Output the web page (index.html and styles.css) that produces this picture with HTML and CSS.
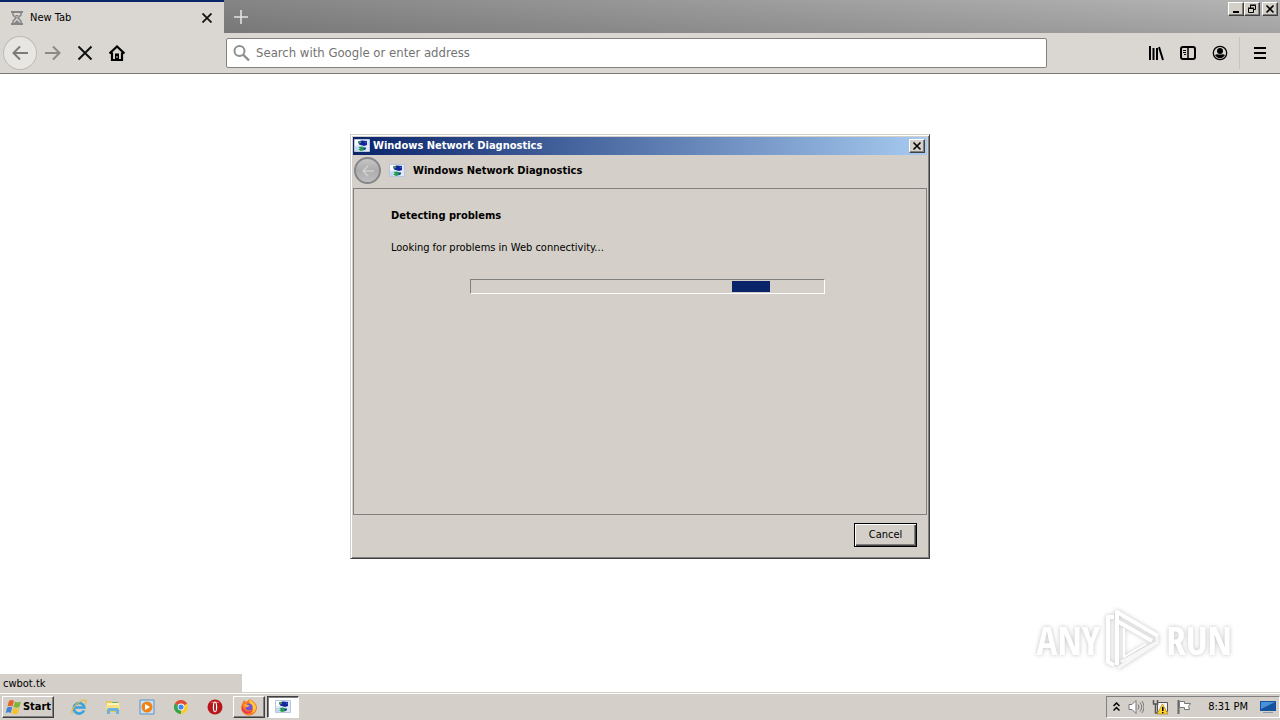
FILE: index.html
```
<!DOCTYPE html>
<html lang="en">
  <head>
    <meta charset="UTF-8" />
    <meta name="viewport" content="width=device-width, initial-scale=1.0" />
    <title>New Tab</title>
    <link rel="stylesheet" href="styles.css" />
  </head>
  <body>
    <!-- Shared window icon -->
    <svg class="defs" width="0" height="0" aria-hidden="true">
      <symbol id="net-icon" viewBox="0 0 16 16">
        <path d="M.5 1.500h15v12H.5z" fill="#dfe8f8" stroke="#b9c4dd" />
        <path d="M1 2h5v5H1z" fill="#fff" />
        <path d="M1 9h3v4H1z" fill="#c3d6f4" />
        <path d="M4 3.500l4-1 5 .5v4l-3 1-5-1.500z" fill="#14259a" />
        <path d="M4 3.500l3-.5v2l-2 .5z" fill="#3f9a5a" />
        <path d="M10 3.500l3 .5-1 1.500z" fill="#3b59cf" />
        <path d="M4 9l4-.5 4 1.500-1 2-4 1-3-1.500 2-1z" fill="#23994f" />
        <path d="M9 10l3-.5v1.500l-2 1z" fill="#1c3fa5" />
      </symbol>
    </svg>

    <header class="tab-strip">
      <div class="tab">
        <svg class="tab-icon" width="14" height="14" viewBox="0 0 14 14" fill="none" stroke="#858585">
          <path d="M1 1h12M1 13h12" stroke-width="2" />
          <path d="M3 2v2l3 3-3 3v2M11 2v2L8 7l3 3v2" stroke-width="1.5" />
          <path d="M5 4h4L7 6zM4 12l3-3 3 3z" fill="#858585" stroke="none" />
        </svg>
        <span class="tab-title">New Tab</span>
        <button class="icon-button tab-close" aria-label="Close tab">
          <svg width="10" height="10" viewBox="0 0 10 10" stroke="#111" stroke-width="1.8"><path d="M.5.5l9 9M9.500.5l-9 9" /></svg>
        </button>
      </div>
      <button class="icon-button new-tab" aria-label="New tab">
        <svg width="14" height="14" viewBox="0 0 14 14" stroke="#e2e2e2" stroke-width="1.6"><path d="M7 0v14M0 7h14" /></svg>
      </button>
      <div class="window-buttons">
        <button class="caption-button" aria-label="Minimize">
          <svg width="10" height="10" viewBox="0 0 10 10"><path d="M2 7h6v2H2z" /></svg>
        </button>
        <button class="caption-button" aria-label="Restore">
          <svg width="10" height="10" viewBox="0 0 10 10" fill="none" stroke="#000"><path d="M3.500 4V1.500h5v4H7M3 1h6M1.500 4.500h5v4h-5zM1 4h6" /></svg>
        </button>
        <button class="caption-button close" aria-label="Close">
          <svg width="10" height="10" viewBox="0 0 10 10" stroke="#000" stroke-width="1.6"><path d="M1.500 1.500l7 7M8.500 1.500l-7 7" /></svg>
        </button>
      </div>
    </header>

    <nav class="toolbar">
      <div class="nav-buttons">
        <button class="icon-button back" aria-label="Back">
          <svg width="16" height="16" viewBox="0 0 16 16" fill="none" stroke="#7d7b78" stroke-width="2"><path d="M16 8H1.500M8 1.500L1.500 8 8 14.500" /></svg>
        </button>
        <button class="icon-button" aria-label="Forward">
          <svg width="16" height="16" viewBox="0 0 16 16" fill="none" stroke="#8b8986" stroke-width="2"><path d="M0 8h14.500M8 1.500L14.500 8 8 14.500" /></svg>
        </button>
        <button class="icon-button" aria-label="Stop">
          <svg width="16" height="16" viewBox="0 0 16 16" stroke="#111" stroke-width="2"><path d="M1.500 1.500l13 13M14.500 1.500l-13 13" /></svg>
        </button>
        <button class="icon-button" aria-label="Home">
          <svg width="16" height="16" viewBox="0 0 16 16" fill="none" stroke="#000" stroke-width="2.200"><path d="M.5 8.500L8 1.500l7.500 7M3 7.500V15h10V7.500" /><path d="M6 8.500h4V14H6z" fill="#000" stroke="none" /><path d="M8 11v2" stroke="#dad7d2" stroke-width="1" /></svg>
        </button>
      </div>
      <label class="url-bar">
        <svg width="18" height="18" viewBox="0 0 18 18" fill="none" stroke="#8f8f8f" stroke-width="2"><circle cx="6.500" cy="7" r="5" /><path d="M10 10.500l6 6" stroke-width="2.400" /></svg>
        <input type="text" placeholder="Search with Google or enter address" aria-label="Address" />
      </label>
      <div class="tool-buttons">
        <button class="icon-button" aria-label="Library">
          <svg width="16" height="16" viewBox="0 0 16 16" stroke="#000" stroke-width="2"><path d="M2 1v14M5.500 3v12M9 3v12M11 2l4 13" /></svg>
        </button>
        <button class="icon-button" aria-label="Sidebars">
          <svg width="16" height="16" viewBox="0 0 16 16" fill="none" stroke="#000" stroke-width="2"><rect x="1" y="2" width="14" height="12" rx="2" /><path d="M8 2v12" stroke-width="1.500" /><path d="M3 5.500h3M3 7.500h3M4 9.500h2" stroke-width="1" /></svg>
        </button>
        <button class="icon-button" aria-label="Account">
          <svg width="16" height="16" viewBox="0 0 16 16"><circle cx="8" cy="8" r="6.700" fill="none" stroke="#000" stroke-width="1.300" /><circle cx="8" cy="6" r="3" /><path d="M3 10c2-1.500 3-.5 5-.5s3-1 5 .5c-1 2-3 3.200-5 3.200S4 12 3 10z" /></svg>
        </button>
      </div>
      <button class="icon-button menu" aria-label="Menu">
        <svg width="12" height="12" viewBox="0 0 12 12" stroke="#000" stroke-width="2"><path d="M0 1h12M0 6h12M0 11h12" /></svg>
      </button>
    </nav>

    <main class="page">
      <section class="dialog" role="dialog" aria-labelledby="dialog-title">
        <div class="dialog-titlebar">
          <svg width="16" height="16"><use href="#net-icon" /></svg>
          <span id="dialog-title">Windows Network Diagnostics</span>
          <button class="caption-button" aria-label="Close dialog">
            <svg width="10" height="10" viewBox="0 0 10 10" stroke="#000" stroke-width="1.6"><path d="M1.500 1.500l7 7M8.500 1.500l-7 7" /></svg>
          </button>
        </div>
        <div class="dialog-header">
          <button class="dialog-back" aria-label="Back" disabled>
            <svg width="14" height="14" viewBox="0 0 14 14" fill="none" stroke="#d0d0d0" stroke-width="1.500"><path d="M13 7H2M7 2L2 7l5 5" /></svg>
          </button>
          <svg width="16" height="16"><use href="#net-icon" /></svg>
          <h1>Windows Network Diagnostics</h1>
        </div>
        <div class="dialog-body">
          <h2>Detecting problems</h2>
          <p>Looking for problems in Web connectivity...</p>
          <div class="progress" role="progressbar" aria-label="Detecting problems">
            <div class="progress-chunk"></div>
          </div>
        </div>
        <div class="dialog-footer">
          <button class="cancel">Cancel</button>
        </div>
      </section>

      <div class="watermark">
        <span>ANY</span>
        <svg width="58" height="64" viewBox="0 0 58 64" fill="none" stroke="#fff" stroke-width="4" stroke-linejoin="round">
          <path d="M10 9H4v45l6 3" />
          <path d="M13 57V4l41 24M13 13l35 20" />
          <path d="M20 20v29l22-13" stroke-width="2" />
          <path d="M54 34L14 60M53 28v6L17 54" stroke="#f7f7f7" stroke-width="3" />
        </svg>
        <span>RUN</span>
      </div>
      <div class="status">cwbot.tk</div>
    </main>

    <footer class="taskbar">
      <button class="start">
        <svg width="18" height="16" viewBox="0 0 18 16">
          <path d="M4 2c2-1.500 4-1 5 0L7.500 7.500C6 6.500 4.500 6.500 2.500 7.300z" fill="#e8602c" />
          <path d="M10 2.500c2 1.300 4 1 6 0L14.500 8c-2 1-4 1-6 0z" fill="#7cb53a" />
          <path d="M2.200 8.500c2-1 3.500-1 5 0L5.700 14c-1.500-1-3-1-5 0z" fill="#3d86cf" />
          <path d="M8.200 9c2 1 4 1 6 0l-1.500 5.500c-2 1-4 1-6 0z" fill="#f5c22f" />
        </svg>
        <span>Start</span>
      </button>
      <div class="quick-launch">
        <button class="icon-button" aria-label="Internet Explorer">
          <svg width="16" height="16" viewBox="0 0 16 16" fill="none">
            <path d="M13 11.500A5.300 5.300 0 1 1 13.400 8.500H4" stroke="#38a3e0" stroke-width="2.600" />
            <path d="M1.500 14.500C-.5 12 4 5 10 2c3-1.500 5-1.300 5 .5 0 1-.4 2-1 3" stroke="#e9b93a" stroke-width="1.200" />
          </svg>
        </button>
        <button class="icon-button" aria-label="Windows Explorer">
          <svg width="16" height="16" viewBox="0 0 16 16">
            <path d="M1 2h5l1 1h7v10H1z" fill="#e9c75c" />
            <path d="M2 4h12v3H2z" fill="#fff3b8" /><path d="M7 3h6v1H7z" fill="#5fb45f" />
            <path d="M1 6h14v5H1z" fill="#f6df86" />
            <path d="M2 15v-4q0-2 2-2h8q2 0 2 2v4h-3v-3H5v3z" fill="#69b3df" />
          </svg>
        </button>
        <button class="icon-button" aria-label="Media Player">
          <svg width="16" height="16" viewBox="0 0 16 16">
            <path d="M1 1h14v14H1z" fill="#c9e0f3" stroke="#5b94c9" />
            <circle cx="8" cy="8" r="5.500" fill="#f08318" /><path d="M6 5l5 3-5 3z" fill="#fff" />
          </svg>
        </button>
        <button class="icon-button" aria-label="Chrome">
          <svg width="16" height="16" viewBox="0 0 16 16">
            <circle cx="8" cy="8" r="7" fill="#f9cd32" />
            <path d="M8 8L1.900 4.500A7 7 0 0 1 14.100 4.600z" fill="#df4a3b" /><path d="M8 8v7A7 7 0 0 1 1.900 4.500z" fill="#36a354" />
            <circle cx="8" cy="8" r="3.400" fill="#fff" /><circle cx="8" cy="8" r="2.600" fill="#4386ee" />
          </svg>
        </button>
        <button class="icon-button" aria-label="Opera">
          <svg width="16" height="16" viewBox="0 0 16 16">
            <circle cx="8" cy="8" r="7.500" fill="#b9161b" /><path d="M3 4a7 6 0 0 1 10 0z" fill="#dc6960" />
            <ellipse cx="8" cy="8" rx="2.200" ry="5.300" fill="#fff" /><ellipse cx="8" cy="8" rx="1" ry="4.500" fill="#9c2a26" />
          </svg>
        </button>
      </div>
      <button class="task" aria-label="Firefox">
        <svg width="18" height="18" viewBox="0 0 18 18">
          <path d="M3 4l1-2 2 2c2-1 3-3 4-3 2 2 6 3 7 8a8 8 0 1 1-16 1c0-2 1-4 2-6z" fill="#fb7a25" />
          <path d="M10 1c1 3 5 3 6 8 0 3-2 6-5 6 3-3 3-6-1-9-1-2-1-4 0-5z" fill="#ffc93c" />
          <path d="M2 7c2 8 8 8 11 4-1 5-8 7-11 1z" fill="#e9384f" />
          <circle cx="9" cy="9" r="3.500" fill="#7550d8" /><path d="M4 6c3 0 4 1 6 2-3 0-2 2-5 1z" fill="#ffae33" />
        </svg>
      </button>
      <button class="task active" aria-label="Windows Network Diagnostics">
        <svg width="16" height="16"><use href="#net-icon" /></svg>
      </button>
      <div class="tray">
        <svg width="7" height="10" viewBox="0 0 7 10" fill="none" stroke="#000" stroke-width="1.500"><path d="M.5 4l3-3 3 3M.5 8.500l3-3 3 3" /></svg>
        <svg width="16" height="16" viewBox="0 0 16 16" fill="none" stroke="#777"><path d="M1 5.500h3l4-4v13l-4-4H1z" fill="#fff" /><path d="M10 5.500q2 2.500 0 5M12 3.500q3.500 4.500 0 9M14 2q4 6 0 12" /></svg>
        <svg width="16" height="16" viewBox="0 0 16 16"><path d="M5.500 3.500h10v9h-10z" fill="#f5f5f5" stroke="#555" /><path d="M1.500 1v4h4V1M3.500 5v9H7" fill="none" stroke="#555" stroke-width="1.500" /><path d="M10.500 5l5.500 10H5z" fill="#ffd426" stroke="#a78520" stroke-width=".7" /><path d="M10 8h1.500v4H10zM10 13h1.500v1.200H10z" /></svg>
        <svg width="16" height="16" viewBox="0 0 16 16"><path d="M2.500 1v14" stroke="#666" stroke-width="2" /><path d="M3.500 2.500h5v2h6l-2 3 1 3h-5v-2h-5z" fill="#fff" stroke="#777" /></svg>
        <time>8:31 PM</time>
        <button class="icon-button" aria-label="Show desktop">
          <svg width="16" height="16" viewBox="0 0 16 16"><path d="M0 2h16v10H0z" fill="#16539f" /><path d="M1 3h14L1 10z" fill="#4b91da" /><path d="M3 13h10v1H3z" fill="#8d99a8" /></svg>
        </button>
      </div>
    </footer>
  </body>
</html>
```
FILE: styles.css
```
* {
  box-sizing: border-box;
}
body {
  margin: 0;
  min-height: 100vh;
  display: flex;
  flex-direction: column;
  background: #fff;
  color: #000;
  font: 11px/14px Tahoma, "DejaVu Sans Condensed", sans-serif;
}
button,
input {
  font: inherit;
  color: inherit;
}
button {
  display: flex;
  align-items: center;
  justify-content: center;
  padding: 0;
}
svg {
  display: block;
  flex: none;
}
.defs {
  position: absolute;
}
.icon-button {
  flex: none;
  border: 0;
  background: none;
}

/* Browser chrome */
.tab-strip {
  display: flex;
  height: 33px;
  background: linear-gradient(rgba(0, 0, 0, 0), rgba(0, 0, 0, 0.1)), linear-gradient(90deg, #858585 18%, #b5b5b5);
}
.tab {
  display: flex;
  align-items: center;
  width: 224px;
  padding: 0 11px 0 10px;
  border-top: 2px solid #0a246a;
  background: #dad7d2;
}
.tab-title {
  flex: 1;
  margin-left: 6px;
}
.tab-close {
  width: 12px;
  height: 12px;
}
.new-tab {
  width: 34px;
}
.window-buttons {
  display: flex;
  margin: 2px 2px 0 auto;
}
.caption-button {
  width: 16px;
  height: 14px;
  border: 1px solid;
  border-color: #fff #404040 #404040 #fff;
  background: #d4d0c8;
  box-shadow: inset -1px -1px #808080;
}
.caption-button.close {
  margin-left: 2px;
}
.toolbar {
  display: flex;
  align-items: center;
  height: 41px;
  border-bottom: 1px solid #7d7b78;
  background: #dad7d2;
}
.nav-buttons {
  display: flex;
  flex: none;
  width: 226px;
  padding-left: 4px;
}
.nav-buttons .icon-button,
.tool-buttons .icon-button {
  width: 32px;
  height: 32px;
}
.nav-buttons .back {
  margin-right: 1px;
  border-radius: 50%;
  background: #e8e6e3;
  box-shadow: 0 0 0 1px #bebbb6;
}
.url-bar {
  display: flex;
  align-items: center;
  flex: 1;
  height: 30px;
  padding-left: 6px;
  border: 1px solid #85827e;
  border-radius: 2px;
  background: #fff;
}
.url-bar input {
  flex: 1;
  min-width: 0;
  padding: 0 5px;
  border: 0;
  outline: 0;
  background: none;
  font-size: 13px;
}
.url-bar input::placeholder {
  color: #737373;
  opacity: 1;
}
.tool-buttons {
  display: flex;
  margin-left: 93px;
}
.menu {
  width: 41px;
  height: 32px;
  margin-left: 3px;
  border-left: 1px solid #c6c3be;
}

/* Page area */
.page {
  position: relative;
  flex: 1;
  padding: 60px 16px;
}
.dialog {
  display: flex;
  flex-direction: column;
  max-width: 580px;
  min-height: 425px;
  margin: 0 auto;
  padding: 2px;
  border: 1px solid;
  border-color: #d4d0c8 #404040 #404040 #d4d0c8;
  background: #d4cfc8;
  box-shadow: inset 1px 1px #fff, inset -1px -1px #808080;
}
.dialog-titlebar {
  display: flex;
  align-items: center;
  gap: 3px;
  height: 18px;
  padding: 0 2px 0 1px;
  background: linear-gradient(90deg, #0a246a, #a6caf0);
  color: #fff;
  font-weight: bold;
}
.dialog-titlebar .caption-button {
  margin-left: auto;
}
.dialog-header {
  display: flex;
  align-items: center;
  height: 33px;
  padding: 0 0 2px 1px;
}
.dialog-back {
  width: 27px;
  height: 27px;
  margin-right: 8px;
  border: 2px solid #85868a;
  border-radius: 50%;
  background: linear-gradient(#c5c5c5, #adadad 50%, #bebebe);
}
h1,
h2 {
  margin: 0;
  font-size: 11px;
  font-weight: bold;
}
h1 {
  margin-left: 8px;
}
.dialog-body {
  flex: 1;
  padding: 20px 37px;
  border: 1px solid #808080;
}
.dialog-body p {
  margin: 18px 0 24px;
}
.progress {
  max-width: 355px;
  height: 15px;
  margin-left: 79px;
  padding: 1px;
  border: 1px solid;
  border-color: #808080 #fff #fff #808080;
}
.progress-chunk {
  width: 11%;
  height: 11px;
  margin-left: 74%;
  background: #0a246a;
}
.dialog-footer {
  display: flex;
  justify-content: flex-end;
  height: 41px;
  padding: 8px 10px;
}
.cancel {
  width: 63px;
  height: 24px;
  border: 1px solid #000;
  background: #d4cfc8;
  box-shadow: inset 1px 1px #fff, inset -1px -1px #404040, inset -2px -2px #808080;
}
.watermark {
  position: absolute;
  right: 48px;
  bottom: 20px;
  display: flex;
  align-items: center;
  gap: 4px;
  color: #fff;
  font: 300 39px/48px "Open Sans Condensed", "Liberation Sans Narrow", "DejaVu Sans Condensed", sans-serif;
  filter: drop-shadow(0 0 2px rgba(0, 0, 0, 0.25));
}
.status {
  position: absolute;
  left: 0;
  bottom: 0;
  width: 242px;
  height: 18px;
  padding: 3px 3px 1px;
  background: #d4cfc8;
}

/* Taskbar */
.taskbar {
  display: flex;
  align-items: center;
  height: 28px;
  padding: 1px 0 0 2px;
  border-top: 1px solid #d4d0c8;
  background: #d4cfc8;
  box-shadow: inset 0 1px #fff;
}
.start,
.task {
  height: 22px;
  border: 1px solid;
  border-color: #fff #404040 #404040 #fff;
  background: #d4cfc8;
  box-shadow: inset -1px -1px #808080;
}
.start {
  width: 52px;
  font-weight: bold;
}
.quick-launch {
  display: flex;
  gap: 18px;
  margin: 0 10px 0 17px;
}
.task {
  width: 32px;
  margin-right: 2px;
}
.task.active {
  border-color: #404040 #fff #fff #404040;
  background: #fff;
  box-shadow: inset 1px 1px #808080;
}
.tray {
  display: flex;
  align-items: center;
  gap: 8px;
  height: 22px;
  margin-left: auto;
  padding: 0 3px 0 6px;
  border: 1px solid;
  border-color: #808080 #fff #fff #808080;
}
.tray time {
  margin: 0 4px 0 8px;
}
```
